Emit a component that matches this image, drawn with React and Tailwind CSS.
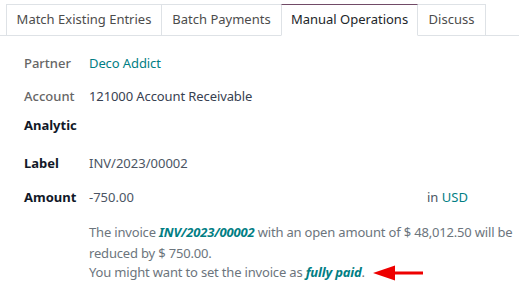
export default function App() {
  const font = { fontFamily: '"Noto Sans", "Open Sans", sans-serif' };
  const tabs = [
    { name: "Match Existing Entries", w: "w-[156px]" },
    { name: "Batch Payments", w: "w-[120px]" },
    { name: "Manual Operations", w: "w-[137px]", active: true },
    { name: "Discuss", w: "w-[68px]" },
  ];
  return (
    <div className="w-[519px] h-[285px] bg-white overflow-hidden text-[13px]" style={font}>
      <div className="flex pl-[6px] pt-[4px] border-b border-[#dee2e6]">
        {tabs.map((t, i) => (
          <div
            key={t.name}
            className={
              "h-[32px] -mb-px flex items-center justify-center whitespace-nowrap border-r border-t " +
              t.w +
              (i === 0 ? " border-l border-[#dee2e6]" : "") +
              (t.active
                ? " border-t-[#714b67] border-r-[#dee2e6] border-l border-l-[#dee2e6] -ml-px bg-white border-b border-b-white text-[#212529]"
                : " border-[#dee2e6] border-b border-b-[#dee2e6] text-[#4c4c4c]")
            }
          >
            {t.name}
          </div>
        ))}
      </div>
      <div className="pl-[24px] leading-[20px]">
        <div className="flex mt-[17px]">
          <div className="w-[65px] text-[#666666] font-medium">Partner</div>
          <div className="text-[#017e84] tracking-[-0.1px]">Deco Addict</div>
        </div>
        <div className="flex mt-[13px]">
          <div className="w-[65px] text-[#666666] font-medium">Account</div>
          <div className="text-[#374151] tracking-[-0.1px]">121000 Account Receivable</div>
        </div>
        <div className="flex mt-[9px]">
          <div className="w-[65px] text-[#111827] font-bold">Analytic</div>
        </div>
        <div className="flex mt-[18px]">
          <div className="w-[65px] text-[#111827] font-bold">Label</div>
          <div className="text-[#4b5563]">INV/2023/00002</div>
        </div>
        <div className="flex mt-[14px]">
          <div className="w-[65px] text-[#111827] font-bold">Amount</div>
          <div className="text-[#4b5563] w-[338px]">-750.00</div>
          <div className="text-[#4b5563]">
            in <span className="text-[#017e84]">USD</span>
          </div>
        </div>
        <div className="pl-[65px] mt-[15px] text-[#6c757d] whitespace-nowrap tracking-[-0.18px]">
          <div className="leading-[21px]">
            The invoice <span className="font-bold italic text-[#017e84]">INV/2023/00002</span> with an open amount of $ 48,012.50 will be
          </div>
          <div className="leading-[20px]">reduced by $ 750.00.</div>
          <div className="leading-[19px] flex items-center">
            <span>
              You might want to set the invoice as <span className="font-bold italic text-[#017e84]">fully paid</span>.
            </span>
            <svg width="52" height="18" viewBox="0 0 52 18" className="ml-[8px]">
              <polygon points="0,9 22,1.5 22,16.5" fill="#ee0000" />
              <rect x="20" y="7.5" width="30" height="3" fill="#ee0000" />
            </svg>
          </div>
        </div>
      </div>
    </div>
  );
}
